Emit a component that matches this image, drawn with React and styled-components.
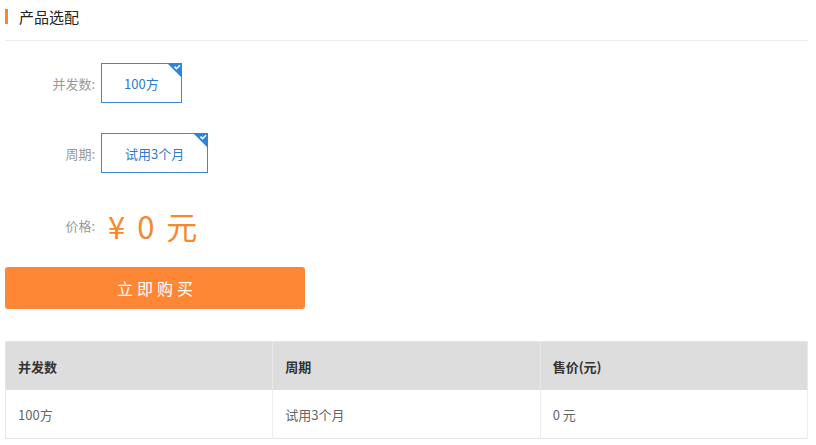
import styled, { createGlobalStyle } from "styled-components";

const GlobalStyle = createGlobalStyle`
  html, body {
    margin: 0;
    padding: 0;
    background: #ffffff;
  }

  body {
    font-family: "Noto Sans CJK SC", "Liberation Sans", sans-serif;
    color: #333333;
  }
`;

const Page = styled.div`
  padding: 0 8px 0 5px;
`;

const Header = styled.div`
  display: flex;
  align-items: center;
  height: 41px;
  border-bottom: 1px solid #ececec;
  box-sizing: border-box;
  padding-bottom: 7px;
`;

const TitleMark = styled.span`
  width: 3px;
  height: 15px;
  background-color: #f08a33;
  margin-right: 11px;
`;

const Title = styled.h3`
  margin: 0;
  font-size: 15px;
  font-weight: 400;
  color: #222222;
`;

const Form = styled.div`
  padding-top: 22px;
`;

const Row = styled.div`
  display: flex;
  align-items: center;
  height: 40px;
  margin-bottom: ${(p) => p.$gap}px;
`;

const Label = styled.span`
  width: 90px;
  margin-right: 6px;
  text-align: right;
  font-size: 13px;
  color: #999999;
`;

const Option = styled.button`
  position: relative;
  height: 40px;
  padding: 0 ${(p) => p.$pad}px;
  box-sizing: border-box;
  border: 1px solid #3b8ad4;
  background: #ffffff;
  color: #2f7cc6;
  font-family: inherit;
  font-size: 13px;
  cursor: pointer;
`;

const Corner = styled.svg`
  position: absolute;
  top: -1px;
  right: -1px;
`;

const Price = styled.span`
  margin-left: 7px;
  font-size: 31px;
  color: #f7892d;
  white-space: pre;
  word-spacing: 5px;
`;

const BuyButton = styled.button`
  display: block;
  width: 300px;
  height: 42px;
  margin-top: 22px;
  border: none;
  border-radius: 3px;
  background-color: #fd8734;
  color: #ffffff;
  font-family: inherit;
  font-size: 16px;
  letter-spacing: 4px;
  text-indent: 4px;
  cursor: pointer;
`;

const Table = styled.table`
  width: 100%;
  margin-top: 32px;
  border-collapse: collapse;
  border: 1px solid #e6e6e6;
  table-layout: fixed;
  font-size: 13px;
`;

const Th = styled.th`
  height: 48px;
  padding: 0 12px;
  background-color: #dddddd;
  border-right: 1px solid #e8e8e8;
  text-align: left;
  font-weight: 700;
  color: #333333;
`;

const Td = styled.td`
  height: 48px;
  padding: 0 12px;
  border-right: 1px solid #eeeeee;
  color: #666666;
`;

const CheckCorner = () => (
  <Corner width="15" height="15" viewBox="0 0 15 15">
    <polygon points="0,0 15,0 15,15" fill="#2c86d8" />
    <polyline
      points="7.5,3.6 9.5,5.6 13,2.2"
      fill="none"
      stroke="#ffffff"
      strokeWidth="1.6"
    />
  </Corner>
);

const columns = ["并发数", "周期", "售价(元)"];
const rows = [["100方", "试用3个月", "0 元"]];

const App = () => {
  return (
    <Page>
      <GlobalStyle />
      <Header>
        <TitleMark />
        <Title>产品选配</Title>
      </Header>
      <Form>
        <Row $gap={30}>
          <Label>并发数:</Label>
          <Option $pad={22}>
            100方
            <CheckCorner />
          </Option>
        </Row>
        <Row $gap={32}>
          <Label>周期:</Label>
          <Option $pad={23}>
            试用3个月
            <CheckCorner />
          </Option>
        </Row>
        <Row $gap={0}>
          <Label>价格:</Label>
          <Price>¥ 0 元</Price>
        </Row>
        <BuyButton>立即购买</BuyButton>
      </Form>
      <Table>
        <thead>
          <tr>
            {columns.map((c) => (
              <Th key={c}>{c}</Th>
            ))}
          </tr>
        </thead>
        <tbody>
          {rows.map((r, i) => (
            <tr key={`row_${i}`}>
              {r.map((cell, j) => (
                <Td key={`cell_${j}`}>{cell}</Td>
              ))}
            </tr>
          ))}
        </tbody>
      </Table>
    </Page>
  );
};

export default App;
